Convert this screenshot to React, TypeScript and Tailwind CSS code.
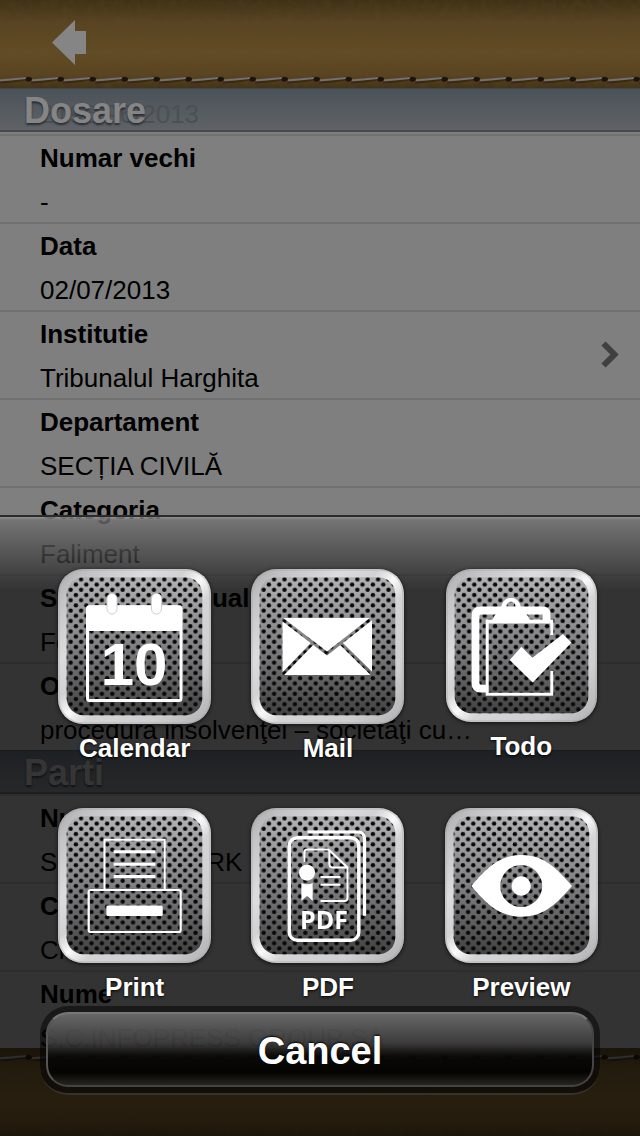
import type { ReactNode } from "react"

interface Field {
  label: string
  value: string
  link?: boolean
}

interface TileProps {
  id: string
  width?: number
  height?: number
  children: ReactNode
}

const caseFields: Field[] = [
  { label: "Numar vechi", value: "-" },
  { label: "Data", value: "02/07/2013" },
  { label: "Institutie", value: "Tribunalul Harghita", link: true },
  { label: "Departament", value: "SECȚIA CIVILĂ" },
  { label: "Categoria", value: "Faliment" },
  { label: "Stadiu procesual", value: "Fond" },
  { label: "Obiect", value: "procedura insolvenţei – societăţi cu…" },
]

const partyFields: Field[] = [
  { label: "Nume", value: "S.C.AGROMARK I" },
  { label: "Calitate", value: "Creditor" },
  { label: "Nume", value: "S.C.INFOPRESS GROUP SA" },
]

function Leather({ id, seamY }: { id: string; seamY: number }) {
  return (
    <svg className="absolute inset-0 h-full w-full" aria-hidden="true">
      <defs>
        <filter id={`${id}-grain`} x="0" y="0" width="100%" height="100%">
          <feTurbulence type="fractalNoise" baseFrequency="0.16 0.12" numOctaves="4" seed="7" />
          <feColorMatrix values="0 0 0 0 0.1  0 0 0 0 0.07  0 0 0 0 0.02  0.9 0.5 0 0 -0.55" />
        </filter>
        <linearGradient id={`${id}-shade`} x1="0" y1="0" x2="0" y2="1">
          <stop offset="0" stopColor="#3f3016" />
          <stop offset="0.25" stopColor="#584422" />
          <stop offset="0.6" stopColor="#634c25" />
          <stop offset="0.85" stopColor="#5a4421" />
          <stop offset="1" stopColor="#433216" />
        </linearGradient>
        <pattern id={`${id}-seam`} x="-4" y={seamY} width="32" height="12" patternUnits="userSpaceOnUse">
          <path d="M3 8.500 Q14 8.500 30 5.500" stroke="#2a1e0c" strokeWidth="4" fill="none" opacity="0.6" />
          <path d="M2 7.500 Q14 6.500 30 5" stroke="#717175" strokeWidth="2.200" fill="none" />
          <ellipse cx="1" cy="6.200" rx="3" ry="2.500" fill="#1c150b" />
          <ellipse cx="32" cy="6.200" rx="2.500" ry="2.500" fill="#1c150b" />
        </pattern>
      </defs>
      <rect width="100%" height="100%" fill={`url(#${id}-shade)`} />
      <rect width="100%" height="100%" filter={`url(#${id}-grain)`} opacity="0.5" />
      <rect y={seamY} width="100%" height="12" fill={`url(#${id}-seam)`} />
    </svg>
  )
}

function SectionTitle({ children, behind }: { children: ReactNode; behind?: string }) {
  return (
    <div className="relative h-11 border-t border-b-2 border-t-[#3f464c] border-b-[#45494e] bg-linear-to-b from-[#4b5258] to-[#5f6367] px-6">
      {behind && (
        <span className="absolute top-0 left-10 text-[26px] leading-[50px] text-[#4b5054]">{behind}</span>
      )}
      <h2 className="relative text-[36px] leading-[44px] font-bold text-[#858585] [text-shadow:0_2px_2px_#2b2f33]">
        {children}
      </h2>
    </div>
  )
}

function FieldList({ fields }: { fields: Field[] }) {
  return (
    <dl>
      {fields.map((field, index) => (
        <div
          key={index}
          className="relative h-[88px] border-t-2 border-[#717171] px-10 text-[26px] text-black"
        >
          <dt className="leading-[45px] font-bold">{field.label}</dt>
          <dd className="leading-[43px]">{field.value}</dd>
          {field.link && (
            <svg className="absolute top-[28px] right-5 h-7 w-5" viewBox="0 0 20 28" aria-hidden="true">
              <path d="M3.500 3.500 L14.500 14.500 L3.500 25.500" fill="none" stroke="#404040" strokeWidth="6" />
            </svg>
          )}
        </div>
      ))}
    </dl>
  )
}

function Tile({ id, width = 153, height = 155, children }: TileProps) {
  return (
    <svg width={width} height={height} viewBox={`0 0 ${width} ${height}`} aria-hidden="true" className="overflow-visible drop-shadow-[0_1px_2px_rgba(0,0,0,0.7)]">
      <defs>
        <linearGradient id={`${id}-frame`} x1="0" y1="0" x2="1" y2="1">
          <stop offset="0" stopColor="#a9a9ab" />
          <stop offset="0.12" stopColor="#c4c4c6" />
          <stop offset="0.3" stopColor="#dcdcde" />
          <stop offset="0.42" stopColor="#d2d2d4" />
          <stop offset="0.5" stopColor="#fafafa" />
          <stop offset="0.58" stopColor="#d4d4d6" />
          <stop offset="0.8" stopColor="#cfcfd1" />
          <stop offset="1" stopColor="#b0b0b2" />
        </linearGradient>
        <linearGradient id={`${id}-face`} x1="0" y1="0" x2="0" y2="1">
          <stop offset="0" stopColor="#b2b2b4" />
          <stop offset="0.5" stopColor="#808082" />
          <stop offset="1" stopColor="#414142" />
        </linearGradient>
        <pattern id={`${id}-mesh`} x="7.500" y="7.800" width="10.400" height="10.400" patternUnits="userSpaceOnUse">
          <circle cx="5.200" cy="2.600" r="2.200" fill="#080808" />
          <circle cx="0" cy="7.800" r="2.200" fill="#080808" />
          <circle cx="10.400" cy="7.800" r="2.200" fill="#080808" />
        </pattern>
      </defs>
      <rect width={width} height={height} rx="25" fill={`url(#${id}-frame)`} />
      <rect x="1" y="1" width={width - 2} height={height - 2} rx="24" fill="none" stroke="#9c9c9e" strokeWidth="1.500" opacity="0.35" />
      <rect x="8.700" y="8.300" width={width - 17.4} height={height - 17} rx="17" fill={`url(#${id}-face)`} />
      <rect x="8.700" y="8.300" width={width - 17.4} height={height - 17} rx="17" fill={`url(#${id}-mesh)`} />
      {children}
    </svg>
  )
}

function CalendarIcon() {
  return (
    <Tile id="calendar">
      <rect x="29.500" y="38" width="93.500" height="93.500" rx="2" fill="none" stroke="#fff" strokeWidth="3" />
      <path d="M28.300 39.300 Q28.300 36.300 31.300 36.300 H121 Q124 36.300 124 39.300 V62 H28.300 Z" fill="#fff" />
      <rect x="49" y="24.500" width="10" height="20.500" rx="5" fill="#fff" stroke="#cfcfcf" />
      <rect x="93.500" y="24.500" width="10" height="20.500" rx="5" fill="#fff" stroke="#cfcfcf" />
      <text x="76" y="116" textAnchor="middle" fontSize="60" fontWeight="700" fill="#fff">
        10
      </text>
    </Tile>
  )
}

function MailIcon() {
  return (
    <Tile id="mail">
      <mask id="mail-folds">
        <rect width="153" height="155" fill="#fff" />
        <path d="M29 48.500 L76 84.500 L122 48.500 M61 75 L30 107 M90.500 75 L122 106" fill="none" stroke="#000" strokeWidth="3.200" />
      </mask>
      <rect x="31.500" y="49" width="89.500" height="57" fill="#fff" mask="url(#mail-folds)" />
    </Tile>
  )
}

function TodoIcon() {
  return (
    <Tile id="todo" width={151} height={153}>
      <path d="M100.500 51 V45 Q100.500 41.500 96 41.500 H35 Q29.500 41.500 29.500 47 V114 Q29.500 119.700 35 119.700 H41" fill="none" stroke="#fff" strokeWidth="7.800" />
      <path fillRule="evenodd" fill="#fff" d="M46.300 51.500 Q48 45 55.500 40.500 A9.700 9.700 0 1 1 74.500 40.500 Q82 45 84 51.500 Z M65 32.800 A4.500 4.500 0 1 0 65 41.800 A4.500 4.500 0 1 0 65 32.800 Z" />
      <path d="M105.800 66 V52.500 H41.200 V125.200 H105.800 V102" fill="none" stroke="#fff" strokeWidth="3" />
      <path d="M40 52.500 H107" stroke="#fff" strokeWidth="4" />
      <path d="M63.700 91 L75.400 77.700 L86.400 88.700 L117 65 L125.400 73.700 L86.700 113.400 Z" fill="#fff" />
    </Tile>
  )
}

function PrintIcon() {
  return (
    <Tile id="print">
      <g fill="none" stroke="#fff">
        <path d="M46.500 81 V31.700 H106.700 V81" strokeWidth="2" />
        <path d="M55.700 43.700 H97.400 M55.700 56.300 H97.400 M55.700 68.500 H97.400" strokeWidth="3" />
        <rect x="30.700" y="82" width="92" height="42" rx="2" strokeWidth="2.200" />
      </g>
      <rect x="48.400" y="97.400" width="56.300" height="10.600" rx="1.500" fill="#fff" />
    </Tile>
  )
}

function PdfIcon() {
  return (
    <Tile id="pdf">
      <g fill="none" stroke="#fff">
        <rect x="38.300" y="29.700" width="69.500" height="102.500" rx="8" strokeWidth="3.400" />
        <path d="M56.700 24 H107 Q113.500 24 113.500 31 V107.700" strokeWidth="3.200" />
        <path d="M53.400 54 V44.500 Q53.400 41.500 56.400 41.500 H77.500 L96.500 59.500 V90 Q96.500 93 93.500 93 H69.500" strokeWidth="2" />
        <path d="M78.400 42 V56 Q78.400 59.500 82 59.500 H96" strokeWidth="2" />
        <path d="M69.500 69 H89.500 M69.500 76.700 H89.500" strokeWidth="2" />
      </g>
      <circle cx="56" cy="64.700" r="8" fill="#fff" />
      <path d="M50.400 75 Q56 77.500 61.700 75 V92.700 L56 88 L50.400 92.700 Z" fill="#fff" />
      <text x="73" y="120.500" textAnchor="middle" fontSize="25" fontWeight="700" fill="#fff" className="font-['Open_Sans',sans-serif]">
        PDF
      </text>
    </Tile>
  )
}

function PreviewIcon() {
  return (
    <Tile id="preview">
      <path
        fillRule="evenodd"
        fill="#fff"
        d="M26.300 78 C40 62 53 47 76.500 47 C100 47 113 62 127 78 C113 94 100 108.700 76.500 108.700 C53 108.700 40 94 26.300 78 Z M76.200 57 A21 21 0 1 0 76.200 99 A21 21 0 1 0 76.200 57 Z"
      />
      <circle cx="76.200" cy="78" r="9.700" fill="#fff" />
    </Tile>
  )
}

const actions = [
  { label: "Calendar", icon: <CalendarIcon /> },
  { label: "Mail", icon: <MailIcon /> },
  { label: "Todo", icon: <TodoIcon /> },
  { label: "Print", icon: <PrintIcon /> },
  { label: "PDF", icon: <PdfIcon /> },
  { label: "Preview", icon: <PreviewIcon /> },
]

function ActionSheet() {
  return (
    <div className="absolute inset-x-0 bottom-0 border-t-2 border-[#2b2b2b] bg-[linear-gradient(to_bottom,rgba(150,150,150,0.8)_0,rgba(113,113,113,0.78)_3px,rgba(73,73,73,0.77)_36px,rgba(25,25,25,0.65)_62px,rgba(0,0,0,0.6)_74px)] pb-[41px]">
      <div className="grid grid-cols-3 gap-y-[45px] pt-[52px] pr-[22px] pl-[38px]">
        {actions.map((action) => (
          <button key={action.label} type="button" className="flex flex-col items-center gap-[9px]">
            {action.icon}
            <span className="text-[26px] leading-[30px] font-bold text-white [text-shadow:0_1px_3px_#000]">
              {action.label}
            </span>
          </button>
        ))}
      </div>
      <div className="mx-10 mt-1 rounded-[28px] border-b-2 border-white/15 bg-black/50 p-1.5">
        <button
          type="button"
          className="h-[75px] w-full rounded-[22px] border-2 border-t-[#777] border-r-[#444] border-b-[#444] border-l-[#555] bg-[linear-gradient(to_bottom,rgba(112,112,112,0.9),rgba(70,70,70,0.8)_40%,rgba(8,8,6,0.75)_60%,rgba(2,2,0,0.85)_82%,rgba(45,43,38,0.8))] pt-1 text-[38px] font-bold text-white [text-shadow:0_-1px_2px_#000]"
        >
          Cancel
        </button>
      </div>
    </div>
  )
}

export default function App() {
  return (
    <div className="relative flex h-screen flex-col overflow-hidden bg-[#7f7f7f] font-['Liberation_Sans',Arial,sans-serif]">
      <header className="relative h-[88px] shrink-0">
        <Leather id="top" seamY={73} />
        <button type="button" aria-label="Back" className="relative mt-5 ml-[52px]">
          <svg width="35" height="45" viewBox="0 0 35 45">
            <path d="M0 22.500 L23 0 V11 H34 V34 H23 V45 Z" fill="#858585" />
          </svg>
        </button>
      </header>
      <main className="min-h-0 flex-1 overflow-hidden">
        <SectionTitle behind="2196/96/2013">Dosare</SectionTitle>
        <div className="pt-0.5">
          <FieldList fields={caseFields} />
        </div>
        <SectionTitle>Parti</SectionTitle>
        <FieldList fields={partyFields} />
      </main>
      <footer className="relative h-[88px] shrink-0">
        <Leather id="bottom" seamY={3} />
      </footer>
      <ActionSheet />
    </div>
  )
}
